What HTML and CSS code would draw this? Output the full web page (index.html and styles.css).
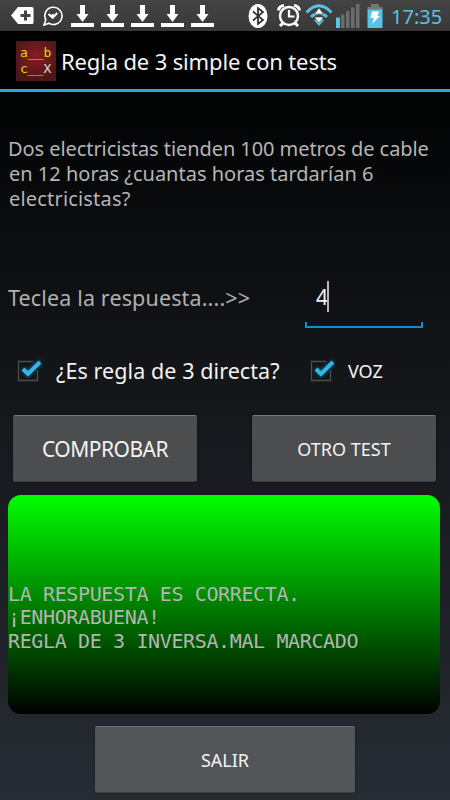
FILE: index.html
```html
<!DOCTYPE html>
<html lang="es">
<head>
    <meta charset="UTF-8">
    <meta name="viewport" content="width=device-width, initial-scale=1.0">
    <title>Regla de 3 simple con tests</title>
    <link rel="stylesheet" href="styles.css">
</head>
<body>
    <svg width="0" height="0" class="defs">
        <symbol id="download" viewBox="0 0 23 23">
            <path d="M9 0h5v9h3.500l-6 8-6-8H9z"/>
            <path d="M0 18h23v4H0z"/>
        </symbol>
        <symbol id="check" viewBox="0 0 28 28">
            <path class="check-frame" d="M18 5.500H3.500v19h19V14"/>
            <path class="check-mark" d="M8 13l5 5L25 6"/>
        </symbol>
    </svg>

    <div class="status-bar">
        <div class="notifications">
            <svg class="tag" width="23" height="19" viewBox="0 0 23 19">
                <path fill="#fff" d="M0 9.500L7 1h14q1.500 0 1.500 1.500v14q0 1.500-1.500 1.500H7z"/>
                <path fill="none" stroke="#444" stroke-width="3" d="M14.500 4.500v10M9.500 9.500h10"/>
            </svg>
            <svg class="chat" width="20" height="20" viewBox="0 0 20 20" fill="none" stroke="#fff">
                <path stroke-width="1.600" d="M1 19l1.800-5.200A8.600 8.600 0 1 1 6 17.200z"/>
                <path stroke-width="2" d="M5.500 8l4.200 3.800L14.200 7M9.700 11.500V8"/>
            </svg>
            <svg class="download"><use href="#download"/></svg>
            <svg class="download"><use href="#download"/></svg>
            <svg class="download"><use href="#download"/></svg>
            <svg class="download"><use href="#download"/></svg>
            <svg class="download"><use href="#download"/></svg>
        </div>
        <div class="system">
            <svg width="20" height="24" viewBox="0 0 20 24">
                <ellipse cx="10" cy="12" rx="9.500" ry="12" fill="#fff"/>
                <path fill="none" stroke="#333" stroke-width="1.800" d="M5 7.500l10 8.500-5 4V4l5 4-10 8.500"/>
            </svg>
            <svg width="24" height="23" viewBox="0 0 24 23" fill="none" stroke="#fff">
                <circle cx="12" cy="12" r="9" stroke-width="2.400"/>
                <path stroke-width="2.200" d="M12 6v6.500h5.500"/>
                <path stroke-width="3" d="M1.500 6.500Q2 2 7 1.500M22.500 6.500Q22 2 17 1.500M6 19l-3 3M18 19l3 3"/>
            </svg>
            <svg width="28" height="22" viewBox="0 0 28 22">
                <g fill="none" stroke="#55c4e6" stroke-width="3">
                    <path d="M1.500 8.500Q14-5 26.500 8.500M6 13q8-8 16 0"/>
                </g>
                <path fill="#55c4e6" d="M9 16q5-4 10 0l-5 6z"/>
                <path fill="#fff" stroke="#444" stroke-width=".6" d="M14 4l4.500 6h-9zM9.500 13h9L14 19z"/>
            </svg>
            <svg width="24" height="24" viewBox="0 0 24 24" fill="#6c6c6c">
                <path fill="#55c4e6" d="M0 13.500h4V24H0z"/>
                <path d="M5 10.500h3.500V24H5zM10 7h3.500v17H10zM15 3.500h3.500V24H15zM20 0h3.500v24H20z"/>
            </svg>
            <svg width="16" height="24" viewBox="0 0 16 24">
                <path fill="#777" d="M4 0h8v3h3.500v3H.5V3H4z"/>
                <path fill="#55c4e6" d="M.5 5.500h15V24H.5z"/>
                <path fill="#fff" d="M5 7.500h7l-1.500 4.500H13l-8 8 2-6H3.500z"/>
            </svg>
            <span class="clock">17:35</span>
        </div>
    </div>

    <div class="action-bar">
        <div class="app-icon">
            <div>a__b</div>
            <div>c__<span>X</span></div>
        </div>
        <h1>Regla de 3 simple con tests</h1>
    </div>

    <div class="content">
        <div class="question">
            <div class="q1">Dos electricistas tienden 100 metros de cable</div>
            <div class="q2">en 12 horas ¿cuantas horas tardarían 6</div>
            <div class="q3">electricistas?</div>
        </div>

        <div class="answer">
            <span class="answer-label">Teclea la respuesta....&gt;&gt;</span>
            <div class="answer-input"><span>4</span><i class="cursor"></i></div>
        </div>

        <div class="options">
            <div class="option direct">
                <svg class="check"><use href="#check"/></svg>
                <span>¿Es regla de 3 directa?</span>
            </div>
            <div class="option voice">
                <svg class="check"><use href="#check"/></svg>
                <span>VOZ</span>
            </div>
        </div>

        <div class="buttons">
            <button class="check-btn"><span>COMPROBAR</span></button>
            <button class="next-btn"><span>OTRO TEST</span></button>
        </div>

        <div class="result">
            <div>LA RESPUESTA ES CORRECTA.</div>
            <div>¡ENHORABUENA!</div>
            <div>REGLA DE 3 INVERSA.MAL MARCADO</div>
        </div>

        <button class="exit-btn"><span>SALIR</span></button>
    </div>
</body>
</html>
```
FILE: styles.css
```css
* {
    box-sizing: border-box;
}

body {
    margin: 0;
    width: 450px;
    height: 800px;
    overflow: hidden;
    font-family: "Noto Sans", "Open Sans", sans-serif;
    color: #f3f3f3;
    background: linear-gradient(#000 31px, #050607 150px, #111316 330px, #272b33 800px);
    white-space: nowrap;
}

.defs {
    display: block;
}

.status-bar {
    height: 31px;
    padding: 4px 8px 0 11px;
    display: flex;
    justify-content: space-between;
    background: linear-gradient(#444, #383838);
}

.notifications,
.system {
    display: flex;
    align-items: flex-start;
}

.tag {
    margin-top: 2px;
}

.chat {
    margin: 2px 0 0 9px;
}

.download {
    width: 23px;
    height: 23px;
    margin: 1px 0 0 7px;
    fill: #fff;
}

.chat + .download {
    margin-left: 8px;
}

.system {
    gap: 7px;
}

.system svg {
    flex: none;
}

.system svg:nth-child(2) {
    margin-left: 2px;
}

.system svg:nth-child(3) {
    margin-left: -3px;
}

.system svg:nth-child(4) {
    margin-left: -4px;
}

.clock {
    width: 51px;
    margin-left: 1px;
    font-size: 20px;
    line-height: 25px;
    color: #55c4e6;
}

.action-bar {
    height: 61px;
    padding-left: 16px;
    display: flex;
    align-items: center;
    background: #000;
    border-bottom: 3px solid #2ba3da;
}

.app-icon {
    width: 40px;
    height: 40px;
    margin-top: 2px;
    padding: 4px 0 0 4px;
    font-family: "DejaVu Sans Mono", monospace;
    font-size: 13px;
    line-height: 16px;
    color: #e3d50a;
    background: radial-gradient(circle at 50% 40%, #8c1b20, #4b171a 75%);
}

.app-icon span {
    color: #ddd;
}

h1 {
    margin: 2px 0 0 5px;
    font-size: 22px;
    font-weight: 400;
    line-height: 30px;
    letter-spacing: -0.15px;
}

.content {
    height: 708px;
    padding-top: 44px;
    display: flex;
    flex-direction: column;
}

.question {
    height: 137px;
    padding-left: 8px;
    font-size: 20px;
    line-height: 25px;
    color: #b5b5b5;
}

.q1 {
    letter-spacing: -0.07px;
}

.q2 {
    padding-left: 1px;
}

.q3 {
    padding-left: 1px;
    letter-spacing: 0.18px;
}

.answer {
    height: 60px;
    display: flex;
    align-items: flex-start;
    padding: 10px 0 0 8px;
}

.answer-label {
    width: 297px;
    font-size: 21.5px;
    line-height: 30px;
    letter-spacing: 0.14px;
    color: #b0b0b0;
}

.answer-input {
    width: 118px;
    height: 45px;
    padding-left: 11px;
    display: flex;
    font-size: 21px;
    line-height: 28px;
    background:
        linear-gradient(#0d8fc9, #0d8fc9) 0 100% / 2px 6px no-repeat,
        linear-gradient(#0d8fc9, #0d8fc9) 100% 100% / 2px 6px no-repeat,
        linear-gradient(#0d8fc9, #0d8fc9) 0 100% / 100% 2px no-repeat;
}

.cursor {
    width: 2px;
    height: 31px;
    margin: -2px 0 0 -1px;
    background: #b8b8b8;
}

.options {
    height: 82px;
    padding: 23px 0 0 15px;
    display: flex;
}

.option {
    display: flex;
    align-items: flex-start;
    line-height: 30px;
}

.direct {
    width: 293px;
    font-size: 21.5px;
    letter-spacing: 0.08px;
}

.direct span {
    padding-left: 1px;
}

.voice {
    font-size: 18px;
}

.check {
    width: 28px;
    height: 28px;
    flex: none;
    margin-right: 12px;
    overflow: visible;
}

.check-frame {
    fill: none;
    stroke: #4c4e51;
    stroke-width: 1.3;
}

.check-mark {
    fill: none;
    stroke: #33b5e5;
    stroke-width: 4;
    filter: drop-shadow(0 0 2px #0d6d94);
}

button {
    height: 67px;
    padding: 0;
    font-family: inherit;
    color: #f3f3f3;
    background: #4c4d4f;
    border: 0;
    border-top: 1px solid #77787a;
    border-bottom: 1px solid #3f4043;
    border-radius: 2px;
    box-shadow: 0 0 1px 1px rgba(0, 0, 0, 0.2);
}

.buttons {
    height: 80px;
    padding: 0 14px 0 13px;
    display: flex;
    justify-content: space-between;
}

.buttons button {
    width: 184px;
}

.check-btn {
    font-size: 21px;
    letter-spacing: -0.5px;
}

.next-btn {
    font-size: 18px;
}

.result {
    width: 432px;
    height: 219px;
    margin-left: 8px;
    padding-top: 88px;
    border-radius: 13px;
    background: linear-gradient(#0f0, #000);
    font-family: "DejaVu Sans Mono", monospace;
    font-size: 20px;
    line-height: 23.3px;
    letter-spacing: -0.37px;
    color: #b5b5b5;
}

.exit-btn {
    width: 260px;
    margin: 12px 0 0 95px;
    font-size: 18px;
    background: #535659;
    border-top-color: #747779;
}
```
